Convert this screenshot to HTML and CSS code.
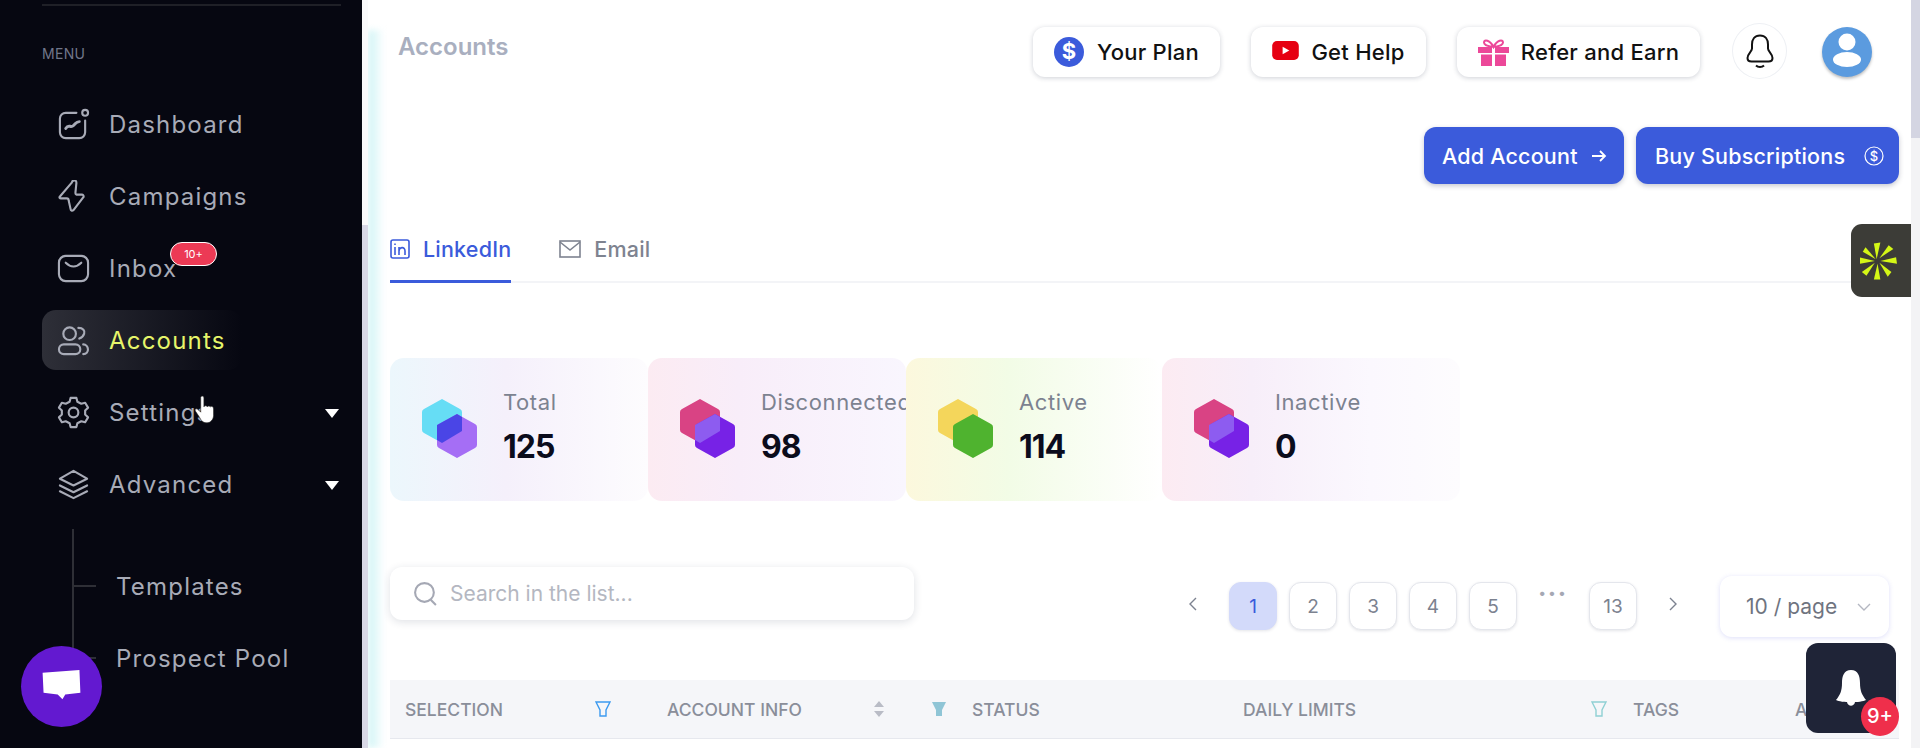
FILE: index.html
```html
<!DOCTYPE html>
<html lang="en">
<head>
<meta charset="utf-8">
<title>Accounts</title>
<link rel="stylesheet" href="styles.css">
</head>
<body>
<div class="app">
  <aside class="sidebar">
    <div class="side-rule"></div>
    <div class="menu-label">MENU</div>
    <nav class="nav">
      <a class="nav-item"><svg class="nav-icon" viewBox="0 0 34 34"><path d="M20 5H9a6 6 0 0 0-6 6v14a6 6 0 0 0 6 6h14a6 6 0 0 0 6-6V13"/><circle cx="29" cy="5" r="3"/><path class="squiggle" d="M9 21c3-5 5 0 8-3s3-4 6-4"/></svg><span>Dashboard</span></a>
      <a class="nav-item"><svg class="nav-icon" viewBox="0 0 34 34"><path d="M15 3 3 17c-1 1 0 2 1 2h6c1 0 2 1 2 2l2 9c0 2 2 2 3 1l10-13c1-1 0-3-1-3h-6c-1 0-1-1-1-2l1-10c0-3-2-3-4-2z"/></svg><span>Campaigns</span></a>
      <a class="nav-item"><svg class="nav-icon" viewBox="0 0 34 34"><rect x="2" y="4" width="30" height="26" rx="7"/><path d="M9 11c5 5 11 5 16 0"/></svg><span class="inbox-label">Inbox<b class="count">10+</b></span></a>
      <a class="nav-item is-active"><svg class="nav-icon" viewBox="0 0 34 34"><circle cx="13" cy="10" r="6.5"/><rect x="2" y="21" width="22" height="10" rx="5"/><path d="M22 4c5 0 7 3 6 6s-2 4-5 5M27 21c6 0 7 10 0 10"/></svg><span>Accounts</span></a>
      <a class="nav-item"><svg class="nav-icon" viewBox="0 0 34 34"><circle cx="17" cy="17" r="5"/><path d="M14 2h6l1 4 4 2 4-1 3 5-3 3v4l3 3-3 5-4-1-4 2-1 4h-6l-1-4-4-2-4 1-3-5 3-3v-4l-3-3 3-5 4 1 4-2z"/></svg><span>Settings</span><i class="caret"></i></a>
      <a class="nav-item"><svg class="nav-icon" viewBox="0 0 34 34"><path d="M17 3 31 11 17 18 3 11zM3 18l14 7 14-7M3 24l14 7 14-7"/></svg><span>Advanced</span><i class="caret"></i></a>
    </nav>
    <div class="subnav">
      <a class="sub-item">Templates</a>
      <a class="sub-item">Prospect Pool</a>
    </div>
    <svg class="cursor" viewBox="0 0 20 28"><path d="M6 2c1-2 3-1 3 1v8l1-1c1 0 2 0 2 1 1-1 2-1 3 0 1-1 3 0 3 2v6c0 4-3 7-6 7s-5-1-7-5l-4-6c-1-2 1-3 3-1l2 2z"/></svg>
    <div class="chat"><svg viewBox="0 0 42 36"><path d="M1 3 40 0l1 24-16 2-3 5-5-5-15-2z"/></svg></div>
  </aside>
  <div class="gutter"><div class="side-scroll"></div><div class="glow"></div></div>
  <main class="main">
    <header class="topbar">
      <h1 class="title">Accounts</h1>
      <div class="top-actions">
        <a class="pill pill-plan"><svg class="pill-icon" viewBox="0 0 30 30"><circle cx="15" cy="15" r="15" fill="#3b5bdb"/><text x="15" y="22" text-anchor="middle" class="dollar">$</text></svg>Your Plan</a>
        <a class="pill pill-help"><svg class="pill-icon yt" viewBox="0 0 28 20"><rect width="28" height="20" rx="5" fill="#e60012"/><path d="M11 6l7 4-7 4z" fill="#fff"/></svg>Get Help</a>
        <a class="pill pill-refer"><svg class="pill-icon gift" viewBox="0 0 31 27"><path d="M15.500 8C12 1 6 0 6 3.500 6 7 12 7.500 15.500 8c3.500-.5 9.500-1 9.500-4.500C25 0 19 1 15.500 8z" fill="none" stroke="#ec4899" stroke-width="2"/><path d="M0 8h14v6H0zM17 8h14v6H17zM3 15.500h11V27H3zM17 15.500h11V27H17z" fill="#ec4899"/></svg>Refer and Earn</a>
        <a class="round"><svg viewBox="0 0 28 34"><path d="M14 1.500c-5.500 0-8 4-8 9v4c0 3-4.500 5-4.500 9.500 0 2.500 2 3.500 4 3.500h17c2 0 4-1 4-3.500 0-4.500-4.500-6.500-4.500-9.500v-4c0-5-2.500-9-8-9z" fill="none" stroke="#111" stroke-width="2"/><path d="M10 31.500c2 2 6 2 8 0" fill="none" stroke="#111" stroke-width="2"/></svg></a>
        <a class="avatar"><svg viewBox="0 0 50 50"><circle cx="25" cy="15" r="8.500" fill="#fff"/><ellipse cx="25" cy="32.500" rx="14" ry="7.500" fill="#fff"/></svg></a>
      </div>
    </header>
    <div class="cta-row">
      <a class="cta cta-add">Add Account<svg class="cta-arrow" viewBox="0 0 16 14"><path d="M1 7h13M9 2l5 5-5 5"/></svg></a>
      <a class="cta cta-buy">Buy Subscriptions<svg class="cta-coin" viewBox="0 0 20 20"><circle cx="10" cy="10" r="9"/><text x="10" y="14.500" text-anchor="middle" class="coin-text">$</text></svg></a>
    </div>
    <div class="tabs">
      <a class="tab is-current"><svg class="tab-icon" viewBox="0 0 20 20"><rect x="1" y="1" width="18" height="18" rx="2"/><path d="M5 8v8M5 4.500v1.500M9 16V8M9 12c0-4 6-5 6 0v4"/></svg>LinkedIn</a>
      <a class="tab"><svg class="tab-icon wide" viewBox="0 0 22 18"><rect x="1" y="1" width="20" height="16"/><path d="M1 2l10 8 10-8"/></svg>Email</a>
    </div>
    <section class="stats">
      <article class="stat stat-total">
        <svg class="stat-icon" viewBox="0 0 55 59"><path fill="#66ddf5" d="M20 0l18 10q2 1 2 3v18q0 2-2 3L20 44 2 34q-2-1-2-3V13q0-2 2-3z"/><path fill="#a56ef5" d="M35 15l18 10q2 1 2 3v18q0 2-2 3L35 59 17 49q-2-1-2-3V28q0-2 2-3z"/><path fill="#4a45e6" d="M35 15l5 3v14L20 44l-5-3V26z"/></svg>
        <div class="stat-body"><div class="stat-label">Total</div><div class="stat-value">125</div></div>
      </article>
      <article class="stat stat-disc">
        <svg class="stat-icon" viewBox="0 0 55 59"><path fill="#d94384" d="M20 0l18 10q2 1 2 3v18q0 2-2 3L20 44 2 34q-2-1-2-3V13q0-2 2-3z"/><path fill="#7722e6" d="M35 15l18 10q2 1 2 3v18q0 2-2 3L35 59 17 49q-2-1-2-3V28q0-2 2-3z"/><path fill="#8d5cf0" d="M35 15l5 3v14L20 44l-5-3V26z"/></svg>
        <div class="stat-body"><div class="stat-label">Disconnected</div><div class="stat-value">98</div></div>
      </article>
      <article class="stat stat-active">
        <svg class="stat-icon" viewBox="0 0 55 59"><path fill="#f4d65b" d="M20 0l18 10q2 1 2 3v18q0 2-2 3L20 44 2 34q-2-1-2-3V13q0-2 2-3z"/><path fill="#4fb32f" d="M35 15l18 10q2 1 2 3v18q0 2-2 3L35 59 17 49q-2-1-2-3V28q0-2 2-3z"/></svg>
        <div class="stat-body"><div class="stat-label">Active</div><div class="stat-value">114</div></div>
      </article>
      <article class="stat stat-inactive">
        <svg class="stat-icon" viewBox="0 0 55 59"><path fill="#d94384" d="M20 0l18 10q2 1 2 3v18q0 2-2 3L20 44 2 34q-2-1-2-3V13q0-2 2-3z"/><path fill="#7722e6" d="M35 15l18 10q2 1 2 3v18q0 2-2 3L35 59 17 49q-2-1-2-3V28q0-2 2-3z"/><path fill="#8d5cf0" d="M35 15l5 3v14L20 44l-5-3V26z"/></svg>
        <div class="stat-body"><div class="stat-label">Inactive</div><div class="stat-value">0</div></div>
      </article>
    </section>
    <div class="toolbar">
      <label class="search"><svg class="search-icon" viewBox="0 0 24 24"><circle cx="11" cy="11" r="9"/><path d="M17 18l5 5"/></svg><span>Search in the list...</span></label>
      <div class="pager">
        <span class="arrow"><svg viewBox="0 0 10 16"><path d="M8 2 2 8l6 6"/></svg></span>
        <a class="page is-on">1</a><a class="page">2</a><a class="page">3</a><a class="page">4</a><a class="page">5</a>
        <span class="dots">•••</span>
        <a class="page">13</a>
        <span class="arrow"><svg viewBox="0 0 10 16"><path d="M2 2l6 6-6 6"/></svg></span>
        <div class="per-page">10 / page<svg viewBox="0 0 14 8"><path d="M1 1l6 6 6-6"/></svg></div>
      </div>
    </div>
    <div class="thead">
      <div class="th th-sel">SELECTION<svg class="filter outline blue" viewBox="0 0 16 16"><path d="M1 1h14l-4 8v6H5V9z"/></svg></div>
      <div class="th th-acc">ACCOUNT INFO<svg class="sorter" viewBox="0 0 12 18"><path d="M6 1l5 6H1zM6 17l5-6H1z"/></svg></div>
      <div class="th th-sta"><svg class="filter solid" viewBox="0 0 16 16"><path d="M1 1h14l-4 8v6H5V9z"/></svg>STATUS</div>
      <div class="th th-day">DAILY LIMITS<svg class="filter outline teal" viewBox="0 0 16 16"><path d="M1 1h14l-4 8v6H5V9z"/></svg></div>
      <div class="th th-tag">TAGS</div>
      <div class="th th-act">ACTIONS</div>
    </div>
    <div class="sidetab"><svg viewBox="0 0 40 40"><g fill="#d4f716"><path d="M18 18 15 1l7-1z"/><path d="M21 17 31 3l5 4z"/><path d="M22 20l17-4 1 7z"/><path d="M21 22l13 10-4 5z"/><path d="M19 23l3 17h-7z"/><path d="M16 22 7 36l-5-4z"/><path d="M16 20 0 23l-1-7z"/><path d="M17 18 3 10l3-5z"/></g></svg></div>
    <div class="notify"><svg viewBox="0 0 34 42"><path d="M17 1c-7 0-9 6-9 13 0 8-2 12-6 17 5 3 25 3 30 0-4-5-6-9-6-17 0-7-2-13-9-13z" fill="#fff"/><path d="M13 33c1 5 7 5 8 0" fill="#fff"/></svg><b class="nine">9+</b></div>
    <div class="scrollbar"><i class="thumb"></i></div>
  </main>
</div>
</body>
</html>
```
FILE: styles.css
```css
* { box-sizing: border-box; }
html, body { margin: 0; height: 100%; }
body { font-family: "Inter", "Liberation Sans", sans-serif; overflow: hidden; background: #fff; }
a { color: inherit; text-decoration: none; }
.app { display: flex; width: 1920px; height: 748px; overflow: hidden; }
.sidebar { position: relative; flex: 0 0 362px; background: #060711; padding: 4px 21px 0 42px; color: #a8abb7; }
.side-rule { height: 2px; background: #1f2027; }
.menu-label { margin-top: 40px; font-size: 14px; line-height: 16px; color: #71768a; letter-spacing: .3px; }
.nav { margin-top: 32px; display: flex; flex-direction: column; }
.nav-item { position: relative; display: flex; align-items: center; height: 60px; margin-bottom: 12px; padding-left: 15px; font-size: 24px; letter-spacing: 1.2px; width: 299px; }
.nav-icon { width: 33px; height: 33px; flex: none; margin-right: 19px; fill: none; stroke: #a8abb7; stroke-width: 2.2; stroke-linecap: round; stroke-linejoin: round; }
.squiggle { stroke-width: 3; }
.is-active { width: 200px; border-radius: 14px; color: #e6f56a; background: linear-gradient(90deg, #2e2f38, #060711); }
.inbox-label { position: relative; }
.count { position: absolute; left: 61px; top: -12px; width: 47px; height: 24px; border-radius: 12px; background: #ec3a55; border: 1px solid #fff; color: #fff; font-size: 11px; font-weight: 400; line-height: 22px; text-align: center; letter-spacing: 0; }
.caret { position: absolute; right: 2px; top: 27px; border: 7px solid transparent; border-top: 9px solid #fff; border-bottom: 0; }
.subnav { margin-top: 3px; padding-top: 27px; margin-left: 30px; border-left: 2px solid #2e2f36; height: 130px; }
.sub-item { position: relative; display: flex; align-items: center; height: 60px; margin-bottom: 12px; padding-left: 42px; font-size: 24px; letter-spacing: 1.2px; }
.sub-item::before { content: ""; position: absolute; left: 0; top: 29px; width: 22px; height: 2px; background: #2e2f36; }
.cursor { position: absolute; left: 193px; top: 395px; width: 24px; height: 30px; fill: #fff; stroke: #222; stroke-width: .6; }
.chat { position: absolute; left: 21px; top: 646px; width: 81px; height: 81px; border-radius: 50%; background: #6319d0; display: flex; align-items: center; justify-content: center; }
.chat svg { width: 41px; height: 34px; fill: #fff; }
.gutter { display: flex; flex: 0 0 22px; }
.side-scroll { position: relative; z-index: 1; flex: 0 0 6px; background: linear-gradient(180deg, #fafafb 0, #fafafb 225px, #d8d8e6 225px); }
.glow { flex: 1; margin-top: 30px; background: linear-gradient(90deg, #cdf3f5, #fff); filter: blur(3px); }
.main { position: relative; flex: 1; padding-right: 21px; min-width: 0; overflow: hidden; }
.topbar { display: flex; justify-content: space-between; height: 127px; padding-left: 14px; }
.title { margin: 33px 0 0; font-size: 24px; line-height: 28px; font-weight: 600; color: #a9afbf; }
.top-actions { display: flex; align-items: flex-start; margin-top: 23px; margin-right: 27px; }
.pill { display: flex; align-items: center; justify-content: center; height: 50px; margin: 4px 31px 0 0; border-radius: 12px; background: #fff; box-shadow: 0 1px 5px rgba(30, 40, 70, .22); font-size: 22px; color: #111; font-weight: 500; letter-spacing: .25px; white-space: nowrap; }
.pill-plan { width: 187px; }
.pill-help { width: 175px; }
.pill-refer { width: 243px; margin-right: 32px; }
.pill-icon { width: 30px; height: 30px; margin-right: 13px; flex: none; }
.pill-icon.yt { width: 27px; height: 19px; margin-right: 12px; margin-top: -3px; }
.pill-icon.gift { width: 31px; height: 27px; margin-right: 12px; }
.dollar { font-size: 22px; font-weight: 700; fill: #fff; font-family: "Inter", sans-serif; }
.round { width: 55px; height: 56px; margin-right: 35px; border-radius: 50%; border: 1px solid #eef0f4; display: flex; align-items: center; justify-content: center; }
.round svg { width: 28px; height: 34px; }
.avatar { width: 50px; height: 50px; margin-top: 4px; border-radius: 50%; background: #5b9bdf; box-shadow: 0 2px 3px rgba(0, 0, 0, .25); }
.avatar svg { display: block; width: 50px; height: 50px; }
.cta-row { display: flex; justify-content: flex-end; gap: 12px; height: 58px; }
.cta { display: flex; align-items: center; padding-left: 18px; height: 57px; border-radius: 12px; background: #3b5bdb; color: #fff; font-size: 21.5px; font-weight: 500; letter-spacing: .2px; box-shadow: 0 2px 5px rgba(30, 40, 70, .25); white-space: nowrap; }
.cta-add { width: 200px; }
.cta-buy { width: 263px; padding-left: 19px; }
.cta-arrow { width: 16px; height: 14px; margin-left: 13px; fill: none; stroke: #fff; stroke-width: 1.8; }
.cta-coin { width: 20px; height: 20px; margin-left: 19px; fill: none; stroke: #fff; stroke-width: 1.2; }
.coin-text { font-size: 13px; fill: #fff; stroke: none; }
.tabs { display: flex; gap: 48px; margin: 40px 0 0 6px; height: 58px; border-bottom: 2px solid #f3f4f7; }
.tab { display: flex; align-items: center; height: 58px; padding-bottom: 7px; border-bottom: 3px solid transparent; font-size: 21.5px; font-weight: 500; letter-spacing: .2px; color: #7e8390; }
.is-current { color: #3b5bdb; border-bottom-color: #3b5bdb; }
.tab-icon { width: 20px; height: 20px; margin-right: 13px; fill: none; stroke: currentColor; stroke-width: 1.6; }
.tab-icon.wide { width: 22px; height: 18px; }
.stats { display: flex; margin: 75px 0 0 6px; height: 143px; }
.stat { display: flex; flex: 0 0 258px; padding: 32px 0 0 32px; border-radius: 14px; overflow: hidden; }
.stat-total { background: linear-gradient(90deg, #ecf7fc, #f5f0fb 45%, #fdfcfe); }
.stat-disc { background: linear-gradient(90deg, #fcebf2, #f8edf9 35%, #f9f6fe); }
.stat-active { flex-basis: 256px; background: linear-gradient(90deg, #fcf8dd, #f2fce6 40%, #fff 100%); }
.stat-inactive { flex-basis: 298px; background: linear-gradient(90deg, #fcebf2, #f7eef9 30%, #fbf8fe 70%, #fdfcfe 100%); }
.stat-icon { width: 55px; height: 59px; margin: 9px 26px 0 0; flex: none; }
.stat-label { font-size: 22px; line-height: 24px; letter-spacing: .6px; color: #7c8290; white-space: nowrap; }
.stat-value { margin-top: 13px; font-size: 32px; line-height: 40px; font-weight: 700; letter-spacing: -1px; color: #0b0c1c; }
.toolbar { display: flex; align-items: flex-start; margin: 66px 0 0 6px; }
.search { display: flex; align-items: center; width: 524px; height: 53px; padding-left: 23px; border-radius: 12px; background: #fff; box-shadow: 0 2px 8px rgba(30, 40, 70, .14); font-size: 21px; color: #b4b7c1; }
.search-icon { width: 25px; height: 25px; margin-right: 12px; fill: none; stroke: #a5a8b4; stroke-width: 2; }
.pager { display: flex; align-items: flex-start; gap: 12px; margin-left: 255px; }
.arrow { width: 48px; height: 48px; display: flex; align-items: center; justify-content: center; margin-top: 13px; }
.arrow svg { width: 10px; height: 16px; fill: none; stroke: #7c8290; stroke-width: 1.4; }
.page { width: 48px; height: 48px; margin-top: 15px; display: flex; align-items: center; justify-content: center; border-radius: 12px; background: #fff; border: 1px solid #e4e6ec; box-shadow: 0 1px 3px rgba(30, 40, 70, .12); color: #7c8290; font-size: 19px; }
.page.is-on { background: #d3dafa; border-color: #d3dafa; color: #3b5bdb; }
.dots { width: 48px; margin-top: 17px; text-align: center; color: #a5a8b4; font-size: 14px; letter-spacing: 2px; }
.per-page { display: flex; align-items: center; justify-content: space-between; width: 169px; height: 61px; margin-top: 9px; margin-left: 11px; padding: 0 18px 0 26px; border-radius: 12px; background: #fff; box-shadow: 0 1px 5px rgba(70, 80, 220, .18); color: #6f7480; font-size: 21px; white-space: nowrap; }
.per-page svg { width: 14px; height: 8px; fill: none; stroke: #b4b7c1; stroke-width: 1.4; }
.thead { display: flex; align-items: center; height: 59px; margin: 43px 0 0 6px; background: #f5f6f9; border-bottom: 1px solid #e6e8ee; color: #8a8e9a; font-size: 17.5px; font-weight: 500; white-space: nowrap; }
.th { display: flex; align-items: center; height: 100%; }
.th-sel { width: 277px; padding: 0 56px 0 15px; justify-content: space-between; }
.th-acc { width: 226px; justify-content: space-between; padding-right: 8px; }
.th-sta { width: 350px; padding-left: 38px; }
.th-day { width: 390px; padding-right: 26px; justify-content: space-between; }
.th-tag { width: 162px; }
.filter { width: 16px; height: 16px; flex: none; stroke-width: 1.4; }
.outline { fill: none; }
.blue { stroke: #3c9af0; }
.teal { stroke: #8fd0d4; }
.solid { fill: #8fc5d6; stroke: none; margin-right: 25px; }
.sorter { width: 12px; height: 18px; fill: #b9bcc6; }
.sidetab { position: absolute; right: 9px; top: 224px; width: 60px; height: 73px; border-radius: 11px 0 0 11px; background: #3c3c37; display: flex; align-items: center; justify-content: center; padding: 0 6px 0 0; }
.sidetab svg { width: 37px; height: 40px; }
.notify { position: absolute; left: 1422px; top: 643px; width: 90px; height: 90px; border-radius: 12px; background: #1f2437; display: flex; justify-content: center; padding-top: 26px; }
.notify svg { width: 34px; height: 42px; }
.nine { position: absolute; left: 55px; top: 54px; width: 38px; height: 39px; border-radius: 50%; background: #ef2f4b; color: #fff; font-size: 20px; font-weight: 500; line-height: 39px; text-align: center; }
.scrollbar { position: absolute; right: 0; top: 0; width: 9px; height: 748px; background: #f3f3f5; }
.thumb { display: block; height: 138px; background: #d4d5e2; }
```
